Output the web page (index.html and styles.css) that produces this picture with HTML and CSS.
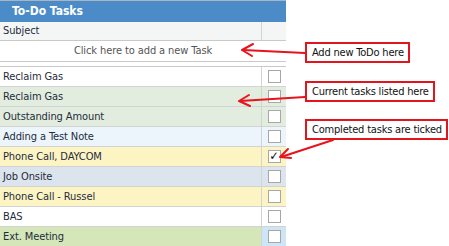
FILE: index.html
```html
<!DOCTYPE html>
<html lang="en">
<head>
    <meta charset="UTF-8">
    <title>To-Do Tasks</title>
    <link rel="stylesheet" href="styles.css">
</head>
<body>
    <div class="page">
        <div class="grid">
            <div class="grid-title">To-Do Tasks</div>
            <div class="row head">
                <div class="subject">Subject</div>
                <div class="check"></div>
            </div>
            <div class="new-row">Click here to add a new Task</div>
            <div class="spacer"></div>

            <div class="row"><div class="subject">Reclaim Gas</div><div class="check"><span class="box"></span></div></div>
            <div class="row green"><div class="subject">Reclaim Gas</div><div class="check"><span class="box"></span></div></div>
            <div class="row green"><div class="subject">Outstanding Amount</div><div class="check"><span class="box"></span></div></div>
            <div class="row sky"><div class="subject">Adding a Test Note</div><div class="check"><span class="box"></span></div></div>
            <div class="row yellow"><div class="subject">Phone Call, DAYCOM</div><div class="check"><span class="box ticked">&#10003;</span></div></div>
            <div class="row slate"><div class="subject">Job Onsite</div><div class="check"><span class="box"></span></div></div>
            <div class="row yellow"><div class="subject">Phone Call - Russel</div><div class="check"><span class="box"></span></div></div>
            <div class="row"><div class="subject">BAS</div><div class="check"><span class="box"></span></div></div>
            <div class="row lime selected"><div class="subject">Ext. Meeting</div><div class="check"><span class="box"></span></div></div>
        </div>

        <svg class="arrows" width="449" height="246" viewBox="0 0 449 246">
            <g stroke="#e8141c" stroke-width="2" fill="none" stroke-linecap="round">
                <path d="M305 53 L243 50"/>
                <path d="M242 50 L253 44 M242 50 L252 56"/>
                <path d="M305 97 L240 101"/>
                <path d="M239 101 L249 95 M239 101 L250 106"/>
                <path d="M333 140 L281 157"/>
                <path d="M280 157 L288 149 M280 157 L291 158"/>
            </g>
        </svg>

        <div class="note note-add">Add new ToDo here</div>
        <div class="note note-current">Current tasks listed here</div>
        <div class="note note-done">Completed tasks are ticked</div>
    </div>
</body>
</html>
```

FILE: styles.css
```css
body {
    margin: 0;
    background: #fff;
    font-family: 'DejaVu Sans Condensed', 'DejaVu Sans', sans-serif;
    font-size: 11px;
    color: #1f2c3b;
}
.page {
    position: relative;
    width: 449px;
    height: 246px;
    overflow: hidden;
}
.grid {
    width: 286px;
    border-top: 1px solid #a9b4bf;
}
.grid-title {
    height: 21px;
    line-height: 21px;
    padding-left: 12px;
    background: #4b8bc8;
    color: #fff;
    font-weight: bold;
    font-size: 12px;
}
.row {
    display: flex;
    height: 19px;
    border-bottom: 1px solid #d3d3d3;
    background: #fff;
}
.row .subject {
    flex: 1;
    padding-left: 3px;
    line-height: 19px;
    white-space: nowrap;
    letter-spacing: -0.1px;
}
.row .check {
    width: 24px;
    border-left: 1px solid #d3d3d3;
    display: flex;
    align-items: center;
    justify-content: center;
}
.row.head {
    height: 18px;
    background: #f4f6f6;
    border-bottom-color: #c9c9c9;
}
.row.head .subject {
    line-height: 18px;
}
.new-row {
    height: 20px;
    line-height: 20px;
    text-align: center;
    color: #555;
    border-bottom: 1px solid #c9c9c9;
    letter-spacing: -0.1px;
}
.spacer {
    height: 4px;
    border-bottom: 1px solid #c9c9c9;
}
.box {
    width: 11px;
    height: 11px;
    border: 1px solid #a7a7a7;
    background: #fff;
    font-size: 12px;
    line-height: 11px;
    text-align: center;
    color: #000;
    font-weight: bold;
    font-style: italic;
}
.green { background: #e2ecdf; }
.sky { background: #ebf5fb; }
.yellow { background: #fdf4c4; }
.slate { background: #dce4ee; }
.lime { background: #d5e6b8; }
.selected .check { background: #cce5f7; }

.arrows {
    position: absolute;
    left: 0;
    top: 0;
}
.note {
    position: absolute;
    left: 305px;
    height: 17px;
    line-height: 17px;
    padding: 0 4px 0 5px;
    border: 2px solid #e2141c;
    background: #fff;
    color: #111;
    font-size: 11px;
    letter-spacing: -0.2px;
    white-space: nowrap;
}
.note-add { top: 42px; }
.note-current { top: 81px; }
.note-done { top: 119px; }
```
